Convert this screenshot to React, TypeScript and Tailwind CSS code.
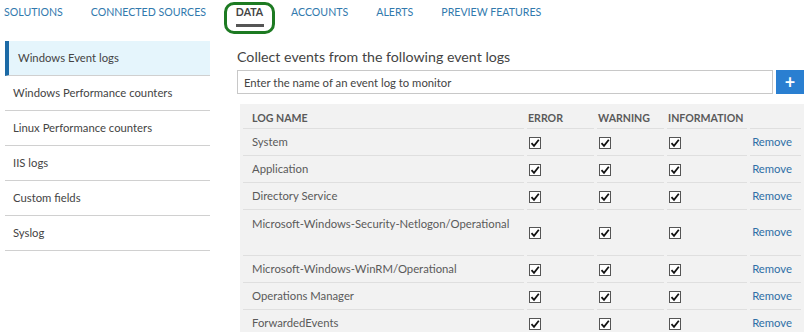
const navItems = ["SOLUTIONS", "CONNECTED SOURCES", "DATA", "ACCOUNTS", "ALERTS", "PREVIEW FEATURES"];

const sideItems = [
  "Windows Event logs",
  "Windows Performance counters",
  "Linux Performance counters",
  "IIS logs",
  "Custom fields",
  "Syslog",
];

const logs = [
  { name: "System" },
  { name: "Application" },
  { name: "Directory Service" },
  { name: "Microsoft-Windows-Security-Netlogon/Operational", tall: true },
  { name: "Microsoft-Windows-WinRM/Operational" },
  { name: "Operations Manager" },
  { name: "ForwardedEvents" },
];

const Check = () => (
  <span className="inline-flex h-[12px] w-[12px] items-center justify-center border border-[#555] bg-white align-middle">
    <svg width="10" height="10" viewBox="0 0 10 10">
      <path d="M1.5 5.2 L4 7.8 L8.8 1.8" fill="none" stroke="#111" strokeWidth="1.8" />
    </svg>
  </span>
);

const App = () => {
  return (
    <div className="h-[332px] w-[807px] overflow-hidden bg-white font-['Lato','Open_Sans',sans-serif] text-[#444]">
      <nav className="flex h-[41px] items-start pl-[4px] pt-[5px] text-[10.6px] leading-[15px]">
        {navItems.map((item) =>
          item === "DATA" ? (
            <div
              key={item}
              className="-mt-[3px] mr-[16px] ml-[-10px] flex h-[32px] w-[51px] flex-col items-center rounded-[10px] border-[3px] border-[#1d7a22]"
            >
              <span className="font-bold text-[#444]">DATA</span>
              <span className="mt-[4px] h-[3px] w-[28px] bg-[#555]" />
            </div>
          ) : (
            <span key={item} className="mr-[28px] text-[#3179ad]">
              {item}
            </span>
          )
        )}
      </nav>

      <div className="flex">
        <aside className="ml-[5px] w-[205px] shrink-0">
          {sideItems.map((item, i) => (
            <div
              key={item}
              className={
                i === 0
                  ? "flex h-[35px] items-center border-b border-l-[4px] border-b-[#d0d0d0] border-l-[#1c6aa6] bg-[#e5f5fc] pl-[9px] text-[11.3px] text-[#444]"
                  : "flex h-[35px] items-center border-b border-[#d0d0d0] pl-[8px] text-[11.3px] text-[#444]"
              }
            >
              {item}
            </div>
          ))}
        </aside>

        <main className="ml-[27px] mr-[3px] flex-1 pt-[6px]">
          <h2 className="text-[14.2px] leading-[20px] text-[#444]">Collect events from the following event logs</h2>
          <div className="mt-[3px] flex h-[24px] gap-[3px]">
            <input
              className="h-[24px] flex-1 border border-[#c8c8c8] px-[6px] text-[11.3px] text-[#444] placeholder:text-[#444] outline-none"
              placeholder="Enter the name of an event log to monitor"
            />
            <button className="flex h-[24px] w-[28px] items-center justify-center bg-[#2a7fd1] text-[18px] font-bold leading-none text-white">
              +
            </button>
          </div>

          <div className="ml-[3px] mt-[10px] bg-[#f2f2f2] pb-[10px]">
            <table className="w-full table-fixed border-separate border-spacing-x-[3px] border-spacing-y-0 text-[11.3px] text-[#5a5a5a]">
              <colgroup>
                <col className="w-[281px]" />
                <col className="w-[67px]" />
                <col className="w-[67px]" />
                <col className="w-[80px]" />
                <col />
              </colgroup>
              <thead>
                <tr className="h-[25px] text-[10.6px] font-bold text-[#5a5a5a]">
                  <th className="border-b border-[#dfdfdf] pl-[9px] pt-[5px] text-left">LOG NAME</th>
                  <th className="border-b border-[#dfdfdf] pl-[1px] pt-[5px] text-left">ERROR</th>
                  <th className="border-b border-[#dfdfdf] pl-[1px] pt-[5px] text-left">WARNING</th>
                  <th className="border-b border-[#dfdfdf] pl-[1px] pt-[5px] text-left">INFORMATION</th>
                  <th className="border-b border-[#dfdfdf]" />
                </tr>
              </thead>
              <tbody>
                {logs.map((log) => (
                  <tr key={log.name} className={log.tall ? "h-[46px]" : "h-[27px]"}>
                    <td
                      className={
                        log.tall
                          ? "border-b border-[#dfdfdf] pl-[9px] pt-[6px] align-top"
                          : "border-b border-[#dfdfdf] pl-[9px] align-middle"
                      }
                    >
                      <span className="whitespace-nowrap">{log.name}</span>
                    </td>
                    <td className="border-b border-[#dfdfdf] pl-[2px] align-middle">
                      <Check />
                    </td>
                    <td className="border-b border-[#dfdfdf] pl-[2px] align-middle">
                      <Check />
                    </td>
                    <td className="border-b border-[#dfdfdf] pl-[2px] align-middle">
                      <Check />
                    </td>
                    <td className="border-b border-[#dfdfdf] pr-[9px] text-right align-middle text-[#2f6fa6]">
                      Remove
                    </td>
                  </tr>
                ))}
              </tbody>
            </table>
          </div>
        </main>
      </div>
    </div>
  );
};

export default App;
